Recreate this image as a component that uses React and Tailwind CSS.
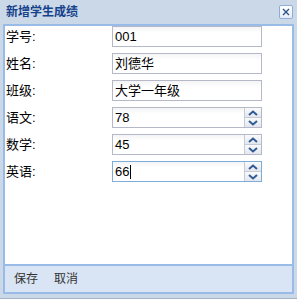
import { useState } from 'react';

const FONT = { fontFamily: '"Liberation Sans", "Noto Sans CJK SC", sans-serif' };

const TextRow = ({ label, value }) => (
  <div className="flex items-center h-[21px]">
    <span className="w-[106px] text-[13px] text-black leading-none">{label}:</span>
    <div className="w-[150px] h-[21px] border border-[#b5b8c8] bg-gradient-to-b from-[#f4f4f4] to-white to-[30%] flex items-center px-[2px] text-[13px] text-black leading-none">
      {value}
    </div>
  </div>
);

const Arrow = ({ up }) => (
  <svg width="10" height="6" viewBox="0 0 10 6">
    <path
      d={up ? 'M1 5 L5 1.5 L9 5' : 'M1 1 L5 4.5 L9 1'}
      fill="none"
      stroke="#2f5b96"
      strokeWidth="2"
    />
  </svg>
);

const SpinRow = ({ label, value, focused }) => (
  <div className="flex items-center h-[21px]">
    <span className="w-[106px] text-[13px] text-black leading-none">{label}:</span>
    <div
      className={`w-[150px] h-[21px] border flex ${
        focused ? 'border-[#7eadd9]' : 'border-[#b5b8c8]'
      }`}
    >
      <div className="flex-1 bg-gradient-to-b from-[#f4f4f4] to-white to-[30%] flex items-center px-[2px] text-[13px] text-black leading-none">
        {value}
        {focused && <span className="w-px h-[14px] bg-black ml-px" />}
      </div>
      <div className="w-[17px] flex flex-col border-l border-[#c6cad6]">
        <div className="flex-1 flex items-center justify-center bg-gradient-to-b from-[#fafafa] to-[#e4e7ee] border-b border-[#c6cad6]">
          <Arrow up />
        </div>
        <div className="flex-1 flex items-center justify-center bg-gradient-to-b from-[#fafafa] to-[#e4e7ee]">
          <Arrow />
        </div>
      </div>
    </div>
  </div>
);

const App = () => {
  const [scores] = useState({ chinese: '78', math: '45', english: '66' });

  return (
    <div style={FONT} className="w-[297px] h-[299px] bg-[#cbd8e8] border-b border-[#a4b4c8] flex flex-col px-[3px] pb-[4px]">
      <div className="h-[24px] flex items-center justify-between pl-[3px] pr-[1px]">
        <span className="text-[12px] font-bold text-[#15428b] leading-none">新增学生成绩</span>
        <div className="w-[14px] h-[14px] rounded-[2px] border border-[#8eaed6] bg-gradient-to-b from-white to-[#e3ecf7] flex items-center justify-center">
          <svg width="8" height="8" viewBox="0 0 8 8">
            <path d="M1 1 L7 7 M7 1 L1 7" stroke="#2a4f86" strokeWidth="1.3" />
          </svg>
        </div>
      </div>

      <div className="flex-1 border-2 border-[#99bbe8] flex flex-col">
        <div className="flex-1 bg-white flex flex-col gap-[6px] pl-[1px]">
          <TextRow label="学号" value="001" />
          <TextRow label="姓名" value="刘德华" />
          <TextRow label="班级" value="大学一年级" />
          <SpinRow label="语文" value={scores.chinese} />
          <SpinRow label="数学" value={scores.math} />
          <SpinRow label="英语" value={scores.english} focused />
        </div>
        <div className="h-[28px] bg-[#d9e5f4] border-t-2 border-[#99bbe8] flex items-center gap-[16px] pl-[9px] text-[12px] text-[#333] leading-none">
          <span>保存</span>
          <span>取消</span>
        </div>
      </div>
    </div>
  );
};

export default App;
